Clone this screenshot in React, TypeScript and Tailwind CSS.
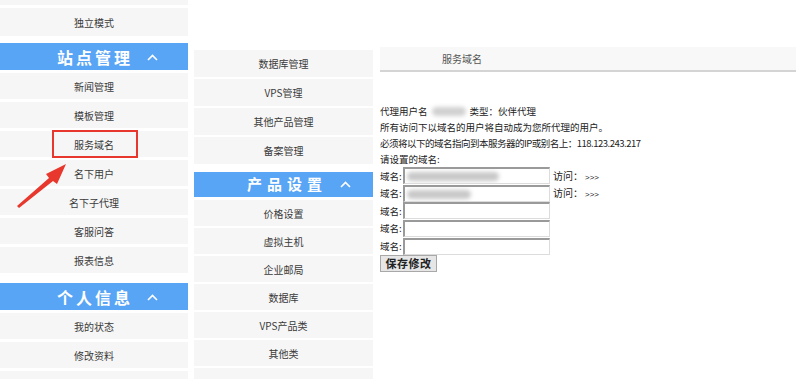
const leftItems = ["新闻管理", "模板管理", "服务域名", "名下用户", "名下子代理", "客服问答", "报表信息"];
const midTop = ["数据库管理", "VPS管理", "其他产品管理", "备案管理"];
const midBottom = ["价格设置", "虚拟主机", "企业邮局", "数据库", "VPS产品类", "其他类"];

function Caret() {
  return (
    <svg width="11" height="7" viewBox="0 0 11 7" className="shrink-0">
      <path d="M1 6 L5.5 1.5 L10 6" fill="none" stroke="white" strokeWidth="1.6" />
    </svg>
  );
}

function NavRow({ label, h = "h-[26px]", mt = "mt-[3px]", boxed = false }: { label: string; h?: string; mt?: string; boxed?: boolean }) {
  return (
    <div className={`relative shrink-0 ${h} ${mt} bg-[#f6f6f6] flex items-center justify-center text-[10px] text-[#3a3a3a]`}>
      {label}
      {boxed && <div className="absolute left-[52px] top-[-1px] w-[86px] h-[28px] border-2 border-[#e8372c]" />}
    </div>
  );
}

function DomainRow({ blur, visit }: { blur?: string; visit?: boolean }) {
  return (
    <div className="flex items-center h-[17.6px]">
      <span className="w-[23px] text-[9.5px] text-[#222]">域名:</span>
      <div className="relative w-[147px] h-[17px] bg-white border-t-2 border-l-2 border-t-[#9a9a9a] border-l-[#9a9a9a] border-b border-r border-b-[#dcdcdc] border-r-[#dcdcdc] overflow-hidden">
        {blur && <div className={`absolute left-[2px] top-[3px] h-[9px] ${blur} bg-[#c8c8c8] blur-[2px] rounded-full`} />}
      </div>
      {visit && (
        <span className="ml-[3px] text-[10px] text-[#222]">
          访问：<span className="ml-[2px] text-[8px] font-['Liberation_Sans',sans-serif]">&gt;&gt;&gt;</span>
        </span>
      )}
    </div>
  );
}

export default function App() {
  return (
    <div className="relative w-[796px] h-[379px] overflow-hidden bg-white flex items-start font-['Noto_Sans_CJK_SC',sans-serif]">
      {/* left column */}
      <div className="w-[188px] flex flex-col shrink-0">
        <div className="h-[5px] shrink-0 bg-[#f6f6f6]" />
        <NavRow label="独立模式" h="h-[28px]" />
        <div className="mt-[7px] h-[27px] shrink-0 bg-[#58a4f5] flex items-center pl-[57px] text-white text-[16px] font-bold tracking-[3px]">
          站点管理
          <span className="ml-[14px] mt-[1px]"><Caret /></span>
        </div>
        {leftItems.map((l) => (
          <NavRow key={l} label={l} boxed={l === "服务域名"} />
        ))}
        <div className="mt-[10px] h-[27px] shrink-0 bg-[#58a4f5] flex items-center pl-[57px] text-white text-[16px] font-bold tracking-[3px]">
          个人信息
          <span className="ml-[14px] mt-[1px]"><Caret /></span>
        </div>
        <NavRow label="我的状态" />
        <NavRow label="修改资料" />
        <NavRow label="" />
      </div>

      {/* middle column */}
      <div className="ml-[6px] w-[179px] shrink-0 pt-[50px] flex flex-col">
        {midTop.map((l, i) => (
          <NavRow key={l} label={l} h="h-[27px]" mt={i === 0 ? "mt-0" : "mt-[2px]"} />
        ))}
        <div className="mt-[8px] h-[25px] shrink-0 bg-[#58a4f5] flex items-center pl-[53px] text-white text-[15px] font-bold tracking-[5px]">
          产品设置
          <span className="ml-[13px]"><Caret /></span>
        </div>
        {midBottom.map((l, i) => (
          <NavRow key={l} label={l} mt={i === 0 ? "mt-[3px]" : "mt-[2px]"} />
        ))}
        <NavRow label="" mt="mt-[2px]" />
      </div>

      {/* right content */}
      <div className="ml-[7px] flex-1 pt-[47px]">
        <div className="h-[25px] bg-[#f8f8f8] border-b-2 border-[#d4d4d4] flex items-center pl-[62px] text-[10px] text-[#555]">
          服务域名
        </div>
        <div className="mt-[31px] text-[9.5px] leading-[16px] text-[#222]">
          <div className="flex items-center">
            代理用户名
            <span className="inline-block w-[34px] h-[9px] mx-[4px] bg-[#d0d0d0] blur-[2px] rounded-full" />
            类型：伙伴代理
          </div>
          <div>所有访问下以域名的用户将自动成为您所代理的用户。</div>
          <div className="tracking-[-0.5px]">必须将以下的域名指向到本服务器的IP或别名上：118.123.243.217</div>
          <div>请设置的域名:</div>
        </div>
        <DomainRow blur="w-[92px]" visit />
        <DomainRow blur="w-[64px]" visit />
        <DomainRow />
        <DomainRow />
        <DomainRow />
        <button className="h-[17px] w-[57px] bg-[#e6e6e6] border border-[#a8a8a8] text-[11px] font-bold text-[#222] flex items-center justify-center tracking-[0.5px]">
          保存修改
        </button>
      </div>

      {/* annotation arrow */}
      <svg className="absolute left-0 top-0 pointer-events-none" width="100" height="220" viewBox="0 0 100 220">
        <path d="M17 206 L49 178 L46 174 L66 164 L57 184 L53 181 L19 208 Z" fill="#e8372c" />
      </svg>
    </div>
  );
}
